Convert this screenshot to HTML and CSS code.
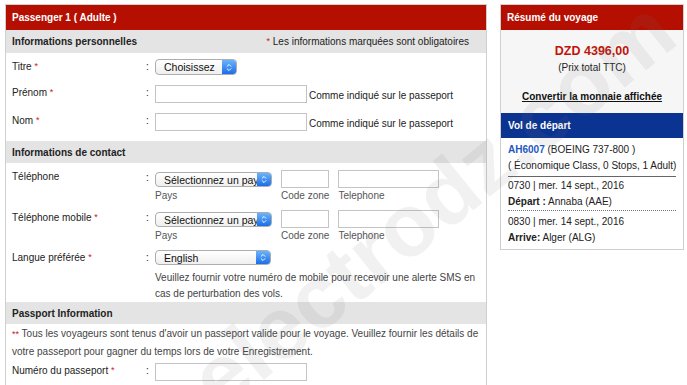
FILE: index.html
```html
<!DOCTYPE html>
<html lang="fr">

<head>
    <meta charset="UTF-8">
    <meta name="viewport" content="width=device-width, initial-scale=1.0">
    <title>Informations passager</title>
    <link rel="stylesheet" href="styles.css">
</head>

<body>
    <div class="page">
        <section class="passenger">
            <h2 class="bar">Passenger 1 ( Adulte )</h2>

            <div class="sect">
                <span>Informations personnelles</span>
                <span class="note"><i class="req">*</i> Les informations marquées sont obligatoires</span>
            </div>
            <div class="fields">
                <div class="field">
                    <label>Titre <i class="req">*</i></label>
                    <span class="colon">:</span>
                    <div class="ctl">
                        <div class="select w-titre">
                            <span>Choisissez</span>
                            <b class="stepper"><svg viewBox="0 0 8 11" width="6" height="9"><path d="M1.2 4.2 L4 1.4 L6.8 4.2 M1.2 6.8 L4 9.6 L6.8 6.8" fill="none" stroke="#fff" stroke-width="1.3"/></svg></b>
                        </div>
                    </div>
                </div>
                <div class="field">
                    <label>Prénom <i class="req">*</i></label>
                    <span class="colon">:</span>
                    <div class="ctl">
                        <input class="text" type="text">
                        <span class="hint">Comme indiqué sur le passeport</span>
                    </div>
                </div>
                <div class="field">
                    <label>Nom <i class="req">*</i></label>
                    <span class="colon">:</span>
                    <div class="ctl">
                        <input class="text" type="text">
                        <span class="hint">Comme indiqué sur le passeport</span>
                    </div>
                </div>
            </div>

            <div class="sect short">
                <span>Informations de contact</span>
            </div>
            <div class="fields contact">
                <div class="field">
                    <label>Téléphone</label>
                    <span class="colon">:</span>
                    <div class="ctl phone">
                        <div class="part">
                            <div class="box">
                                <div class="select w-pays">
                                    <span>Sélectionnez un pays</span>
                                    <b class="stepper"><svg viewBox="0 0 8 11" width="6" height="9"><path d="M1.2 4.2 L4 1.4 L6.8 4.2 M1.2 6.8 L4 9.6 L6.8 6.8" fill="none" stroke="#fff" stroke-width="1.3"/></svg></b>
                                </div>
                            </div>
                            <small>Pays</small>
                        </div>
                        <div class="part">
                            <div class="box"><input class="text zone" type="text"></div>
                            <small>Code zone</small>
                        </div>
                        <div class="part">
                            <div class="box"><input class="text tel" type="text"></div>
                            <small>Telephone</small>
                        </div>
                    </div>
                </div>
                <div class="field">
                    <label>Téléphone mobile <i class="req">*</i></label>
                    <span class="colon">:</span>
                    <div class="ctl phone">
                        <div class="part">
                            <div class="box">
                                <div class="select w-pays">
                                    <span>Sélectionnez un pays</span>
                                    <b class="stepper"><svg viewBox="0 0 8 11" width="6" height="9"><path d="M1.2 4.2 L4 1.4 L6.8 4.2 M1.2 6.8 L4 9.6 L6.8 6.8" fill="none" stroke="#fff" stroke-width="1.3"/></svg></b>
                                </div>
                            </div>
                            <small>Pays</small>
                        </div>
                        <div class="part">
                            <div class="box"><input class="text zone" type="text"></div>
                            <small>Code zone</small>
                        </div>
                        <div class="part">
                            <div class="box"><input class="text tel" type="text"></div>
                            <small>Telephone</small>
                        </div>
                    </div>
                </div>
                <div class="field">
                    <label>Langue préférée <i class="req">*</i></label>
                    <span class="colon">:</span>
                    <div class="ctl stack">
                        <div class="select w-langue">
                            <span>English</span>
                            <b class="stepper"><svg viewBox="0 0 8 11" width="6" height="9"><path d="M1.2 4.2 L4 1.4 L6.8 4.2 M1.2 6.8 L4 9.6 L6.8 6.8" fill="none" stroke="#fff" stroke-width="1.3"/></svg></b>
                        </div>
                        <p class="sms">Veuillez fournir votre numéro de mobile pour recevoir une alerte SMS en cas de perturbation des vols.</p>
                    </div>
                </div>
            </div>

            <div class="sect short">
                <span>Passport Information</span>
            </div>
            <p class="pp-note"><i class="req">**</i> Tous les voyageurs sont tenus d'avoir un passeport valide pour le voyage. Veuillez fournir les détails de votre passeport pour gagner du temps lors de votre Enregistrement.</p>
            <div class="fields passport">
                <div class="field">
                    <label>Numéro du passeport <i class="req">*</i></label>
                    <span class="colon">:</span>
                    <div class="ctl">
                        <input class="text" type="text">
                    </div>
                </div>
            </div>
        </section>

        <aside class="summary">
            <h2 class="bar">Résumé du voyage</h2>
            <div class="total">
                <div class="amount">DZD 4396,00</div>
                <div class="ttc">(Prix total TTC)</div>
                <a class="convert" href="#">Convertir la monnaie affichée</a>
            </div>
            <h3 class="leg-bar">Vol de départ</h3>
            <div class="flight">
                <div class="flight-head">
                    <div><span class="code">AH6007</span> (BOEING 737-800 )</div>
                    <div>( Économique Class, 0 Stops, 1 Adult)</div>
                </div>
                <div class="leg">
                    <div>0730 | mer. 14 sept., 2016</div>
                    <div><b>Départ :</b> Annaba (AAE)</div>
                </div>
                <div class="leg">
                    <div>0830 | mer. 14 sept., 2016</div>
                    <div><b>Arrive:</b> Alger (ALG)</div>
                </div>
            </div>
        </aside>

        <div class="watermark">electrodz.com</div>
    </div>
</body>

</html>
```

FILE: styles.css
```css
body {
    margin: 0;
    font-family: "Liberation Sans", Arial, Helvetica, sans-serif;
    font-size: 10px;
    color: #222;
    background-color: #fff;
}

.page {
    position: relative;
    display: flex;
    align-items: flex-start;
    gap: 13px;
    height: 381px;
    padding: 4px 0 0 5px;
    overflow: hidden;
}

.passenger {
    width: 480px;
    min-height: 400px;
    border: 1px solid #cfcfcf;
    border-bottom: none;
}

.bar {
    margin: 0;
    height: 25px;
    line-height: 25px;
    padding-left: 6px;
    background-color: #b50f02;
    color: #fff;
    font-size: 10px;
    font-weight: bold;
}

.sect {
    display: flex;
    justify-content: space-between;
    align-items: center;
    height: 23px;
    padding: 0 17px 0 6px;
    background-color: #e4e4e4;
    font-weight: bold;
}

.sect.short {
    height: 22px;
}

.sect .note {
    font-weight: normal;
}

.req {
    font-style: normal;
    color: #d0101a;
    font-size: 9px;
    vertical-align: 1px;
}

.fields {
    display: flex;
    flex-direction: column;
    gap: 10px;
    padding: 6px 0 10px 6px;
}

.fields.contact {
    gap: 8px;
    padding: 7px 0 0 6px;
}

.fields.passport {
    padding: 3px 0 10px 6px;
}

.field {
    display: grid;
    grid-template-columns: 134px 9px auto;
    align-items: start;
}

.field label,
.field .colon {
    padding-top: 1px;
    line-height: 12px;
}

.field .colon {
    padding-top: 2px;
}

.ctl {
    display: flex;
    align-items: center;
}

.ctl.stack {
    flex-direction: column;
    align-items: flex-start;
}

.text {
    box-sizing: border-box;
    width: 152px;
    height: 18px;
    margin: 0;
    padding: 0 3px;
    border: 1px solid #c4c4c4;
    background-color: #fff;
    font: inherit;
}

.hint {
    margin-left: 2px;
    padding-top: 3px;
}

.select {
    display: flex;
    box-sizing: border-box;
    height: 16px;
    border: 1px solid #adadad;
    border-radius: 4px;
    background: linear-gradient(#ffffff, #efefef);
    overflow: hidden;
}

.select span {
    flex: 1;
    padding-left: 8px;
    line-height: 14px;
    font-size: 10.5px;
    color: #111;
    white-space: nowrap;
    overflow: hidden;
}

.stepper {
    display: flex;
    justify-content: center;
    align-items: center;
    width: 14px;
    background: linear-gradient(#6ab4fb, #1c6ee8);
}

.w-titre {
    width: 82px;
}

.w-pays {
    width: 117px;
    height: 15px;
}

.w-langue {
    width: 116px;
    height: 15px;
}

.phone {
    align-items: flex-start;
    gap: 9px;
}

.part .box {
    display: flex;
    align-items: center;
    height: 18px;
}

.part small {
    display: block;
    margin-top: 2px;
    line-height: 12px;
    font-size: 10px;
    color: #555;
}

.zone {
    width: 48px;
}

.tel {
    width: 101px;
}

.sms {
    width: 322px;
    margin: 5px 0 0;
    line-height: 16px;
    color: #444;
}

.pp-note {
    margin: 0;
    padding: 1px 2px 0 6px;
    line-height: 17px;
    color: #444;
}

.pp-note .req {
    vertical-align: 0;
}

.summary {
    width: 182px;
    border: 1px solid #cfcfcf;
}

.total {
    padding: 13px 0 9px;
    background-color: #f6f6f6;
    text-align: center;
}

.amount {
    margin-bottom: 2px;
    line-height: 16px;
    font-size: 12.5px;
    font-weight: bold;
    color: #c0140a;
}

.ttc {
    line-height: 14px;
}

.convert {
    display: inline-block;
    margin-top: 15px;
    line-height: 14px;
    font-weight: bold;
    color: #111;
    text-decoration: underline;
}

.leg-bar {
    margin: 0;
    height: 25px;
    line-height: 25px;
    padding-left: 7px;
    background-color: #0b3391;
    color: #fff;
    font-size: 10px;
    font-weight: bold;
}

.flight {
    padding: 4px 7px 3px 7px;
    line-height: 16px;
    white-space: nowrap;
}

.flight-head {
    padding-bottom: 2px;
    border-bottom: 1px solid #666;
}

.code {
    font-weight: bold;
    color: #1e58c2;
}

.leg {
    padding-top: 1px;
    border-bottom: 1px dotted #777;
}

.leg + .leg {
    padding-top: 3px;
    border-bottom: none;
}

.watermark {
    position: absolute;
    left: 432px;
    top: 205px;
    transform: translate(-50%, -50%) rotate(-39deg);
    font-size: 88px;
    font-weight: bold;
    color: rgba(120, 120, 120, 0.1);
    white-space: nowrap;
    pointer-events: none;
}
```
